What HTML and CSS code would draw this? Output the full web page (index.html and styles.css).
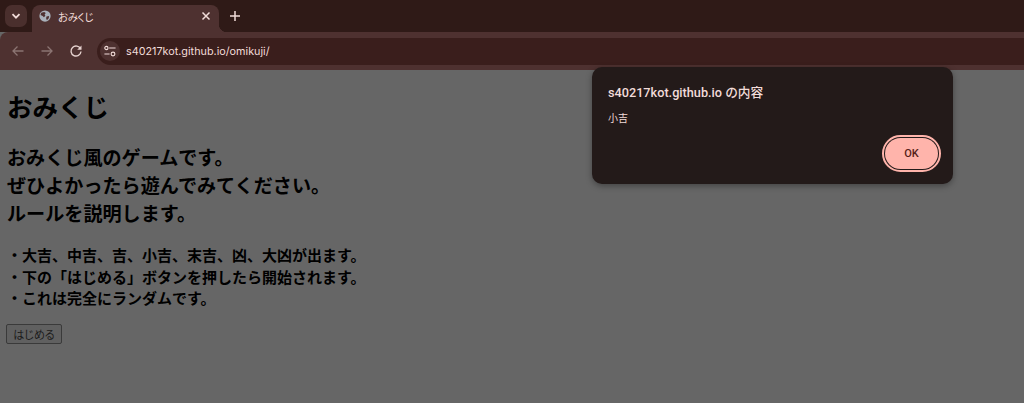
FILE: index.html
```html
<!DOCTYPE html>
<html lang="ja">
<head>
    <meta charset="UTF-8">
    <title>おみくじ</title>
    <link rel="stylesheet" href="styles.css">
</head>
<body>
    <!-- Tab strip -->
    <div class="tabstrip">
        <div class="tabsearch">
            <svg width="10" height="10" viewBox="0 0 10 10"><path d="M1.5 3.2 5 6.7 8.5 3.2" fill="none" stroke="#f2dcd9" stroke-width="1.8"/></svg>
        </div>
        <div class="tab">
            <svg class="favicon" width="16" height="16" viewBox="0 0 16 16">
                <circle cx="8" cy="8" r="7.5" fill="#a9b1ba"/>
                <path d="M3 3.5 7 2.5 9 4 7.5 6 8.5 7.5 6.5 9.5 5 8 2 6.5ZM10 8.5 13.5 8 13 11 10.5 13.5 9.5 11Z" fill="#4e3130"/>
            </svg>
            <span class="tabtitle">おみくじ</span>
            <svg class="tabclose" width="10" height="10" viewBox="0 0 10 10"><path d="M1.5 1.5 8.5 8.5M8.5 1.5 1.5 8.5" stroke="#f2dcd9" stroke-width="1.5"/></svg>
        </div>
        <svg class="newtab" width="12" height="12" viewBox="0 0 12 12"><path d="M6 1V11M1 6H11" stroke="#f2dcd9" stroke-width="1.5"/></svg>
    </div>
    <!-- Toolbar -->
    <div class="toolbar">
        <svg class="navicon" width="14" height="14" viewBox="0 0 14 14"><path d="M12.5 7H2M6.5 2.5 2 7 6.5 11.5" fill="none" stroke="#8b7472" stroke-width="1.3"/></svg>
        <svg class="navicon" width="14" height="14" viewBox="0 0 14 14"><path d="M1.5 7H12M7.5 2.5 12 7 7.5 11.5" fill="none" stroke="#8b7472" stroke-width="1.3"/></svg>
        <svg class="navicon" width="14" height="14" viewBox="0 0 14 14"><path d="M11.6 5A5 5 0 1 0 12 7.5" fill="none" stroke="#e6d2cf" stroke-width="1.4"/><path d="M12.5 1.5V5.8H8.2Z" fill="#e6d2cf"/></svg>
        <div class="omnibox">
            <div class="siteinfo">
                <svg width="14" height="14" viewBox="0 0 14 14">
                    <path d="M6 3.5H13.5M0.5 10.5H6.5" fill="none" stroke="#f2dcd9" stroke-width="1.3"/>
                    <circle cx="2.8" cy="3.5" r="1.9" fill="none" stroke="#f2dcd9" stroke-width="1.3"/>
                    <circle cx="10.5" cy="10.5" r="2.2" fill="none" stroke="#f2dcd9" stroke-width="1.3"/>
                </svg>
            </div>
            <span class="url">s40217kot.github.io/omikuji/</span>
        </div>
    </div>
    <!-- Page (dimmed behind the alert) -->
    <div class="page">
        <h1>おみくじ</h1>
        <h3>おみくじ風のゲームです。<br>ぜひよかったら遊んでみてください。<br>ルールを説明します。</h3>
        <p class="rules">・大吉、中吉、吉、小吉、末吉、凶、大凶が出ます。<br>・下の「はじめる」ボタンを押したら開始されます。<br>・これは完全にランダムです。</p>
        <button class="start">はじめる</button>
    </div>
    <!-- Alert -->
    <div class="alert">
        <div class="alerttitle">s40217kot.github.io の内容</div>
        <div class="alertmsg">小吉</div>
        <div class="alertbuttons">
            <button class="ok">OK</button>
        </div>
    </div>
</body>
</html>
```

FILE: styles.css
```css
:root{
    --strip-color: #2f1a17;
    --tab-color: #4e3130;
    --omni-color: #3a1e1c;
    --text-color: #f2dcd9;
    --page-color: #666666;
    --alert-color: #231a19;
    --ok-color: #ffb4ab;
}
html, body {
    margin: 0;
    height: 100%;
    overflow: hidden;
}
body {
    position: relative;
    display: flex;
    flex-direction: column;
    background-color: var(--page-color);
    font-family: "Noto Sans CJK JP", sans-serif;
}
.tabstrip {
    height: 32px;
    flex: 0 0 auto;
    display: flex;
    align-items: flex-end;
    background-color: var(--strip-color);
    padding-left: 5px;
}
.tabsearch {
    width: 22px;
    height: 22px;
    margin: 0 5px 5px 0;
    border-radius: 7px;
    background-color: #4a2f2d;
    display: flex;
    align-items: center;
    justify-content: center;
}
.tab {
    position: relative;
    width: 187px;
    height: 27px;
    box-sizing: border-box;
    padding: 0 8px 5px 7px;
    border-radius: 8px 8px 0 0;
    background-color: var(--tab-color);
    display: flex;
    align-items: center;
}
/* curved foot on the right of the active tab */
.tab::after {
    content: "";
    position: absolute;
    right: -8px;
    bottom: 0;
    width: 8px;
    height: 8px;
    background: radial-gradient(circle at 100% 0, transparent 8px, var(--tab-color) 8.5px);
}
.favicon {
    width: 12px;
    height: 12px;
    margin-right: 7px;
}
.tabtitle {
    flex: 1;
    font-size: 10.5px;
    font-feature-settings: "palt";
    letter-spacing: -0.4px;
    color: var(--text-color);
}
.newtab {
    margin: 0 0 10px 10px;
}
.toolbar {
    height: 38px;
    flex: 0 0 auto;
    box-sizing: border-box;
    display: flex;
    align-items: center;
    padding-left: 11px;
    background-color: var(--tab-color);
    border-radius: 8px 0 0 0;
}
.navicon {
    margin-right: 15px;
}
.omnibox {
    flex: 1;
    height: 27px;
    margin-left: -1px;
    border-radius: 14px 0 0 14px;
    background-color: var(--omni-color);
    display: flex;
    align-items: center;
    padding-left: 3px;
}
.siteinfo {
    width: 20px;
    height: 20px;
    border-radius: 50%;
    background-color: var(--tab-color);
    display: flex;
    align-items: center;
    justify-content: center;
    margin-right: 6px;
}
.siteinfo svg {
    width: 12px;
    height: 12px;
}
.url {
    font-family: "Inter", "Roboto", sans-serif;
    font-size: 10.8px;
    color: var(--text-color);
}
.page {
    flex: 1;
    padding: 0 7px;
    color: #000000;
    background-color: var(--page-color);
}
h1 {
    font-size: 25.5px;
    font-weight: bold;
    line-height: 36px;
    margin: 18px 0 0 0;
}
h3 {
    font-size: 19.1px;
    line-height: 28px;
    margin: 19px 0 0 0;
}
.rules {
    font-size: 15px;
    font-weight: bold;
    line-height: 21.5px;
    margin: 17px 0 0 0;
}
.start {
    display: block;
    width: 56px;
    height: 20px;
    margin: 15px 0 0 -1px;
    padding: 0;
    font-family: inherit;
    font-size: 11px;
    font-feature-settings: "palt";
    line-height: 16px;
    color: #1c1c1c;
    background-color: #606060;
    border: 1px solid #3a3a3a;
    border-radius: 2px;
}
.alert {
    position: absolute;
    left: 592px;
    top: 67px;
    width: 361px;
    height: 117px;
    box-sizing: border-box;
    padding: 17px 16px 0;
    border-radius: 10px;
    background-color: var(--alert-color);
    box-shadow: 0 2px 6px rgba(0,0,0,.35);
    color: var(--text-color);
}
.alerttitle {
    font-family: "Roboto", "Noto Sans CJK JP", sans-serif;
    font-size: 12.7px;
    font-weight: 500;
    line-height: 18px;
}
.alertmsg {
    font-size: 10px;
    line-height: 16px;
    margin-top: 8px;
}
.alertbuttons {
    display: flex;
    justify-content: flex-end;
    margin-top: 12px;
}
.ok {
    width: 53px;
    height: 31px;
    margin-right: -1px;
    padding: 0;
    border: 0;
    border-radius: 16px;
    background-color: var(--ok-color);
    outline: 2px solid var(--ok-color);
    outline-offset: 1px;
    color: #561e19;
    font-family: "Roboto", sans-serif;
    font-size: 11px;
    font-weight: 500;
}
```
